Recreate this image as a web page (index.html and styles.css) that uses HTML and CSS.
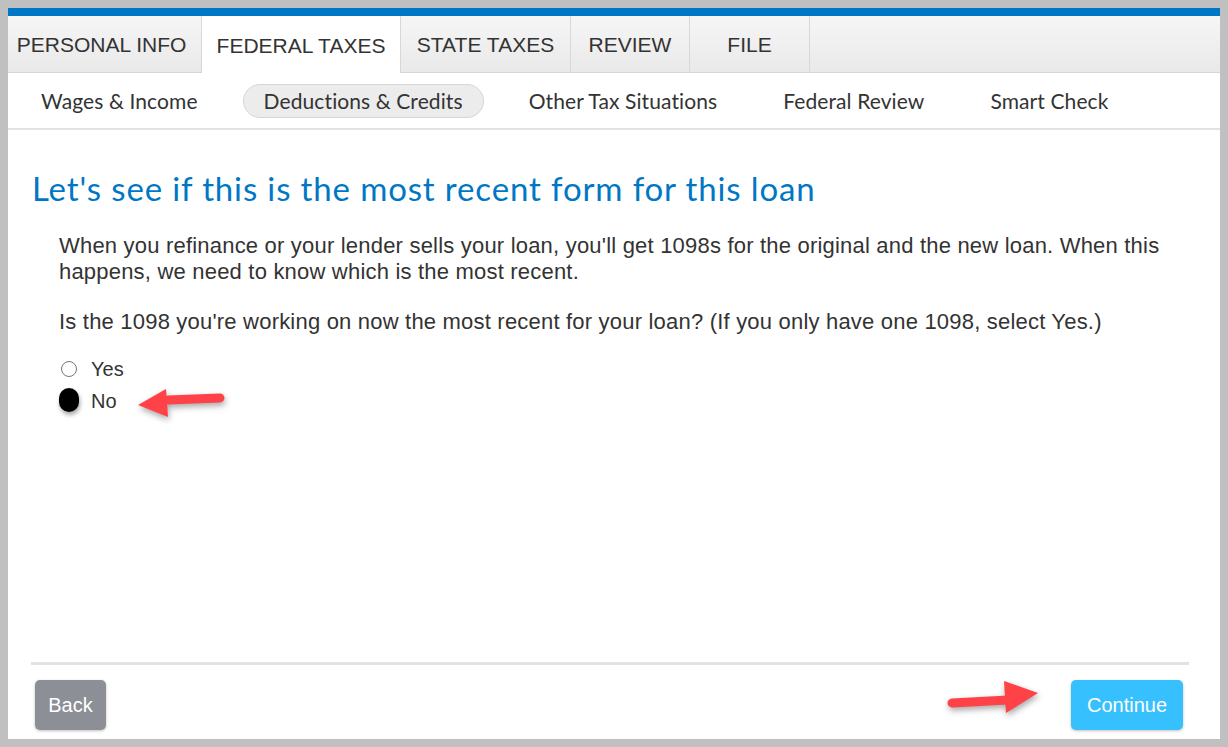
FILE: index.html
```html
<!DOCTYPE html>
<html lang="en">

<head>
  <meta charset="UTF-8" />
  <meta name="viewport" content="width=device-width, initial-scale=1.0" />
  <title>Federal Taxes - Deductions &amp; Credits</title>
  <link rel="stylesheet" href="styles.css">
</head>

<body>
  <div class="frame">
    <div class="topbar"></div>
    <nav class="tabs">
      <div class="tab tab-personal">PERSONAL INFO</div>
      <div class="tab tab-federal active">FEDERAL TAXES</div>
      <div class="tab tab-state">STATE TAXES</div>
      <div class="tab tab-review">REVIEW</div>
      <div class="tab tab-file">FILE</div>
    </nav>
    <nav class="subnav">
      <div class="subitem">Wages &amp; Income</div>
      <div class="subitem current">Deductions &amp; Credits</div>
      <div class="subitem">Other Tax Situations</div>
      <div class="subitem">Federal Review</div>
      <div class="subitem">Smart Check</div>
    </nav>

    <main class="content">
      <h1>Let's see if this is the most recent form for this loan</h1>
      <div class="body-text">
        <p>When you refinance or your lender sells your loan, you'll get 1098s for the original and the new loan. When this happens, we need to know which is the most recent.</p>
        <p class="question">Is the 1098 you're working on now the most recent for your loan? (If you only have one 1098, select Yes.)</p>
        <div class="options">
          <label class="option"><span class="radio"></span>Yes</label>
          <label class="option"><span class="radio checked"></span>No</label>
        </div>
      </div>
    </main>

    <footer class="footer">
      <button class="btn btn-back">Back</button>
      <button class="btn btn-continue">Continue</button>
    </footer>

    <!-- annotation arrows -->
    <svg class="arrow arrow-left" width="100" height="40" viewBox="0 0 100 40">
      <path d="M84 14 L32 16" stroke="#ff4248" stroke-width="9" stroke-linecap="round" fill="none" />
      <path d="M2 21 L30 5 L32 33 Z" fill="#ff4248" />
    </svg>
    <svg class="arrow arrow-right" width="100" height="44" viewBox="0 0 100 44">
      <path d="M6 30 L62 27" stroke="#ff4248" stroke-width="9" stroke-linecap="round" fill="none" />
      <path d="M92 20 L58 8 L60 40 Z" fill="#ff4248" />
    </svg>
  </div>
</body>

</html>
```

FILE: styles.css
```css
body {
  margin: 0;
  background: #c0c0c0;
  padding: 8px;
  font-family: "Liberation Sans", Arial, sans-serif;
  color: #333;
}

.frame {
  position: relative;
  background: white;
  height: 731px;
  display: flex;
  flex-direction: column;
  overflow: hidden;
}

.topbar {
  height: 8px;
  background: #0077c5;
}

.tabs {
  display: flex;
  height: 56px;
  background: linear-gradient(#f6f6f6, #e9e9e9);
  border-bottom: 1px solid #d6d6d6;
}

.tab {
  display: flex;
  align-items: center;
  justify-content: center;
  font-size: 21px;
  color: #333;
  border-right: 1px solid #d8d8d8;
  padding-top: 2px;
  box-sizing: border-box;
}

.tab.active {
  background: white;
  height: 57px;
}

.tab-personal { width: 194px; padding-right: 6px; }
.tab-federal { width: 199px; }
.tab-state { width: 170px; }
.tab-review { width: 119px; }
.tab-file { width: 120px; }

.subnav {
  display: flex;
  align-items: center;
  gap: 24px;
  padding-left: 12px;
  border-bottom: 2px solid #e2e2e2;
  box-sizing: border-box;
  height: 57px;
}

.subitem {
  font-family: Lato, "Noto Sans", sans-serif;
  font-size: 21px;
  letter-spacing: 0.1px;
  color: #333;
  padding: 0 20px;
  height: 34px;
  line-height: 32px;
  border-radius: 17px;
  border: 1px solid transparent;
  box-sizing: border-box;
}

.subitem.current {
  background: #ececec;
  border-color: #d6d6d6;
}

.content {
  flex: 1;
  padding: 40px 0 0 24px;
}

h1 {
  margin: 0;
  font-family: Lato, "Noto Sans", sans-serif;
  font-weight: normal;
  font-size: 33px;
  line-height: 36px;
  color: #0077c5;
  letter-spacing: 0.86px;
}

.body-text {
  padding-left: 27px;
  margin-top: 27px;
  font-size: 22px;
  line-height: 26px;
  letter-spacing: 0.2px;
  color: #333;
}

.body-text p {
  margin: 0;
  padding-right: 40px;
}

.body-text .question {
  margin-top: 24px;
}

.options {
  margin-top: 18px;
  font-size: 20px;
  letter-spacing: 0;
}

.option {
  display: flex;
  align-items: center;
  height: 32px;
  gap: 14px;
}

.radio {
  width: 16px;
  height: 16px;
  border: 1px solid #777;
  border-radius: 50%;
  box-sizing: border-box;
  margin-left: 2px;
  margin-right: 0;
}

.radio.checked {
  width: 20px;
  height: 24px;
  background: black;
  border: none;
  border-radius: 10px;
  margin-left: 0;
  margin-right: -2px;
  margin-top: -2px;
  box-shadow: 1px 3px 4px rgba(0, 0, 0, 0.35);
}

.footer {
  margin: 0 31px 9px 23px;
  border-top: 3px solid #e2e2e2;
  padding-top: 15px;
  display: flex;
  justify-content: space-between;
}

.btn {
  height: 50px;
  border: none;
  border-radius: 5px;
  color: white;
  font-family: "Liberation Sans", Arial, sans-serif;
  font-size: 20px;
  box-shadow: 0 1px 3px rgba(0, 0, 0, 0.25);
}

.btn-back {
  width: 71px;
  margin-left: 4px;
  background: #8c8f96;
}

.btn-continue {
  width: 112px;
  margin-right: 6px;
  background: #36c0fe;
}

.arrow {
  position: absolute;
  filter: drop-shadow(1px 3px 3px rgba(0, 0, 0, 0.35));
}

.arrow-left {
  left: 128px;
  top: 376px;
}

.arrow-right {
  left: 938px;
  top: 665px;
}
```
